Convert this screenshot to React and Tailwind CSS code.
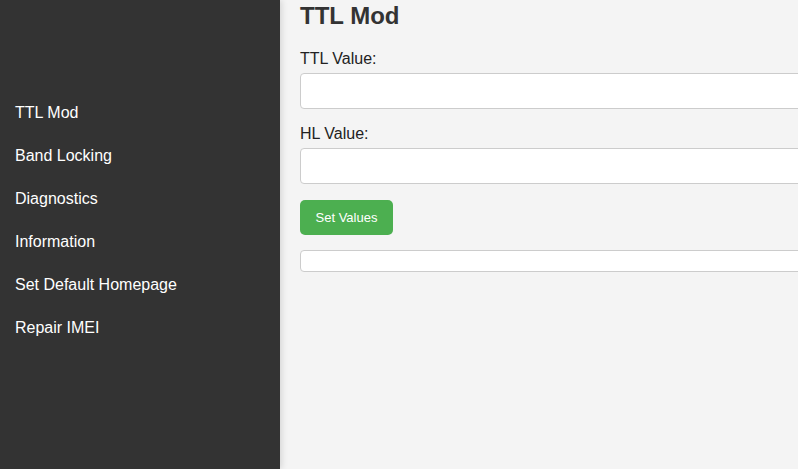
import React, { useState } from 'react';

const links = ["TTL Mod", "Band Locking", "Diagnostics", "Information", "Set Default Homepage", "Repair IMEI"];

const App = () => {
  const [ttl, setTtl] = useState("");
  const [hl, setHl] = useState("");

  return (
    <div className="flex w-[798px] h-[469px] overflow-hidden bg-[#f4f4f4] font-['Liberation_Sans',Arial,sans-serif]">
      <nav className="w-[280px] shrink-0 h-full bg-[#333333] pt-[91px] z-10 shadow-[2px_0_6px_rgba(0,0,0,0.12)]">
        {links.map((l) => (
          <a key={l} href="#" className="flex items-center h-[43px] px-[15px] text-white text-[16px]">
            {l}
          </a>
        ))}
      </nav>
      <main className="flex-1 pl-[20px] pt-[2px] overflow-hidden">
        <h2 className="text-[24px] leading-[28px] font-bold text-[#333333]">TTL Mod</h2>
        <div className="mt-[20px] w-[700px]">
          <label className="block text-[16px] leading-[18px] text-[#222]">TTL Value:</label>
          <input
            type="text"
            value={ttl}
            onChange={(e) => setTtl(e.target.value)}
            className="block mt-[5px] w-full h-[36px] bg-white border border-[#cccccc] rounded-[4px] px-2 outline-none"
          />
          <label className="block mt-[16px] text-[16px] leading-[18px] text-[#222]">HL Value:</label>
          <input
            type="text"
            value={hl}
            onChange={(e) => setHl(e.target.value)}
            className="block mt-[5px] w-full h-[36px] bg-white border border-[#cccccc] rounded-[4px] px-2 outline-none"
          />
          <button className="block mt-[16px] h-[35px] w-[93px] bg-[#4caf50] text-white text-[13px] rounded-[5px]">
            Set Values
          </button>
          <div className="mt-[15px] h-[22px] bg-white border border-[#cccccc] rounded-[4px]"></div>
        </div>
      </main>
    </div>
  );
};

export default App;
